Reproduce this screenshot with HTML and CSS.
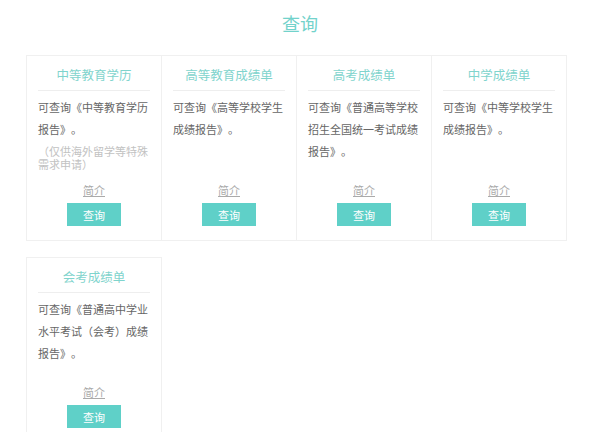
FILE: index.html
```
<!DOCTYPE html>
<html lang="zh-CN">
<head>
    <meta charset="UTF-8">
    <meta name="viewport" content="width=device-width, initial-scale=1.0">
    <title>查询</title>
    <link rel="stylesheet" href="styles.css">
</head>
<body>
    <h1 class="page-title">查询</h1>

    <div class="cards">
        <div class="card">
            <h2 class="card-title">中等教育学历</h2>
            <div class="card-desc">
                <p>可查询《中等教育学历报告》。</p>
                <p class="note">（仅供海外留学等特殊需求申请）</p>
            </div>
            <a class="intro" href="#">简介</a>
            <button class="btn">查询</button>
        </div>

        <div class="card">
            <h2 class="card-title">高等教育成绩单</h2>
            <div class="card-desc">
                <p>可查询《高等学校学生成绩报告》。</p>
            </div>
            <a class="intro" href="#">简介</a>
            <button class="btn">查询</button>
        </div>

        <div class="card">
            <h2 class="card-title">高考成绩单</h2>
            <div class="card-desc">
                <p>可查询《普通高等学校招生全国统一考试成绩报告》。</p>
            </div>
            <a class="intro" href="#">简介</a>
            <button class="btn">查询</button>
        </div>

        <div class="card">
            <h2 class="card-title">中学成绩单</h2>
            <div class="card-desc">
                <p>可查询《中等学校学生成绩报告》。</p>
            </div>
            <a class="intro" href="#">简介</a>
            <button class="btn">查询</button>
        </div>

        <div class="card">
            <h2 class="card-title">会考成绩单</h2>
            <div class="card-desc">
                <p>可查询《普通高中学业水平考试（会考）成绩报告》。</p>
            </div>
            <a class="intro" href="#">简介</a>
            <button class="btn">查询</button>
        </div>
    </div>
</body>
</html>
```

FILE: styles.css
```
body {
  margin: 0;
  background-color: #fff;
  font-family: "Noto Sans CJK SC", "Noto Sans", sans-serif;
  color: #666;
  text-spacing-trim: space-all;
}

.page-title {
  margin: 0;
  padding: 11px 0 20px;
  font-size: 18px;
  line-height: 24px;
  font-weight: normal;
  text-align: center;
  color: #72d2cb;
}

.cards {
  display: grid;
  grid-template-columns: repeat(4, 135px);
  row-gap: 16px;
  margin-left: 26px;
}

.card {
  box-sizing: border-box;
  height: 186px;
  margin-right: -1px;
  padding: 0 11px 14px;
  border: 1px solid #f0f0f0;
  text-align: center;
}

.card-title {
  margin: 0;
  padding: 9px 0 5px;
  font-size: 12.5px;
  line-height: 20px;
  font-weight: normal;
  color: #7fd4cd;
  border-bottom: 1px solid #eee;
}

.card-desc {
  min-height: 85px;
  margin-top: 5px;
  text-align: left;
}

.card-desc p {
  margin: 0;
  font-size: 11px;
  line-height: 22px;
  color: #666;
}

.card-desc p.note {
  margin-top: 5px;
  line-height: 13px;
  color: #c2c2c2;
}

.intro {
  display: block;
  width: max-content;
  margin: 0 auto 4px;
  font-size: 11px;
  line-height: 18px;
  color: #aaa;
  text-decoration: underline;
}

.btn {
  display: block;
  width: 54px;
  height: 23px;
  margin: 0 auto;
  padding: 0;
  border: none;
  background-color: #5fd0c8;
  color: #fff;
  font-family: inherit;
  font-size: 11px;
  cursor: pointer;
}
```
